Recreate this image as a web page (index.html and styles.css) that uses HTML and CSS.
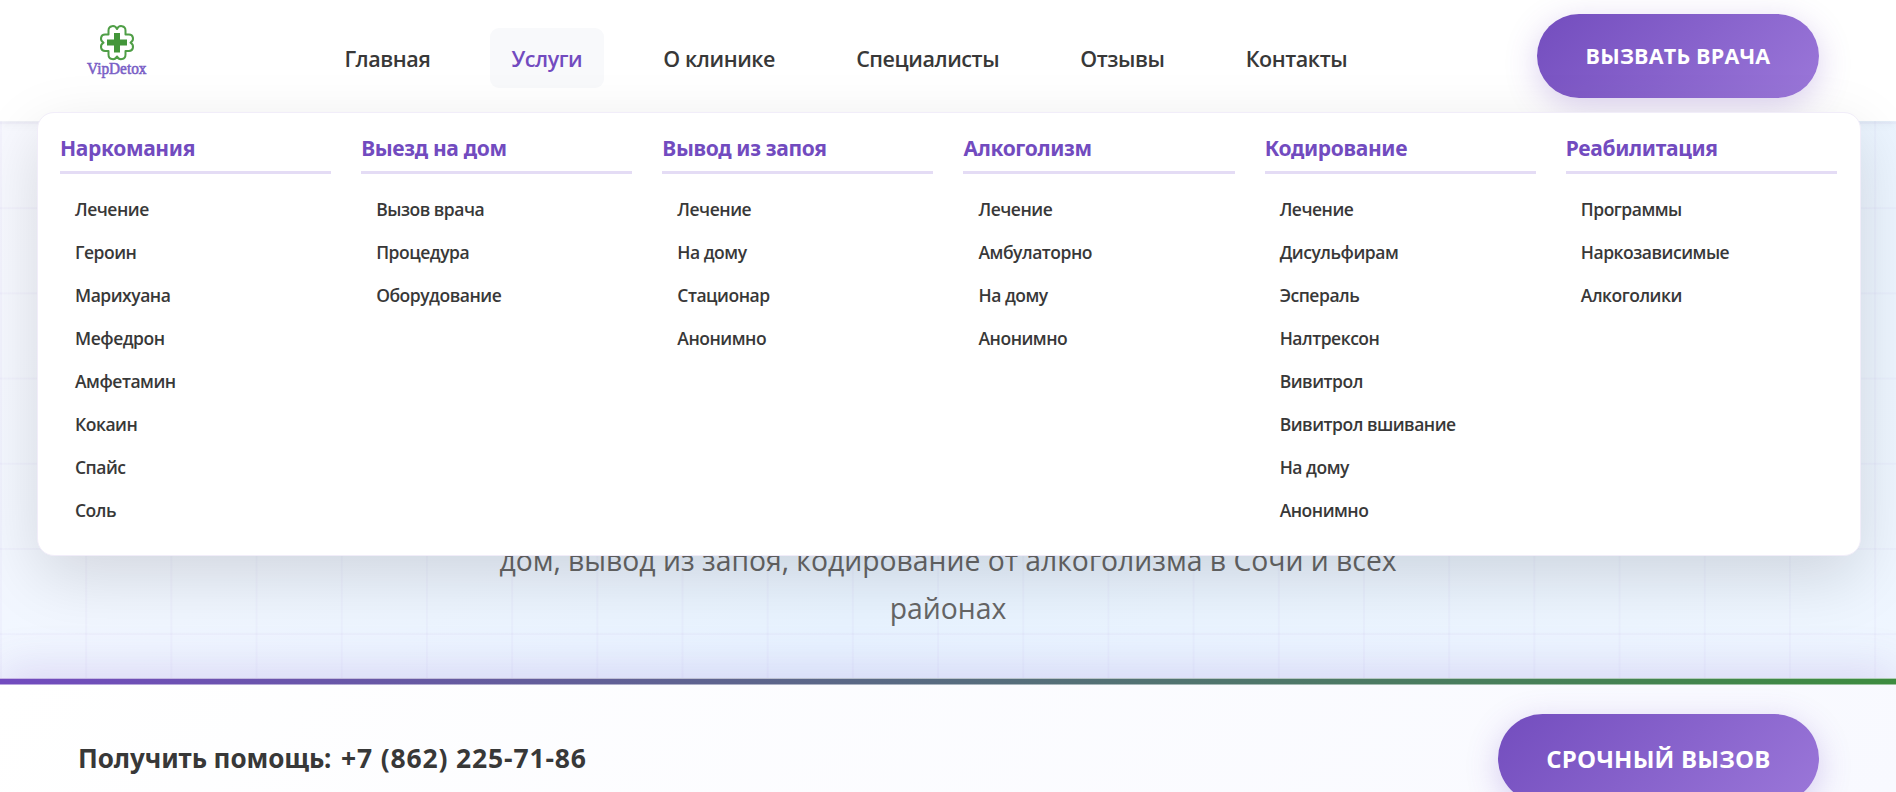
FILE: index.html
```
<!DOCTYPE html>
<html lang="ru">
<head>
    <meta charset="UTF-8">
    <meta name="viewport" content="width=device-width, initial-scale=1.0">
    <title>VipDetox</title>
    <link rel="stylesheet" href="styles.css">
</head>
<body>
    <header class="header">
        <a href="#" class="logo">
            <svg width="80" height="60" viewBox="0 0 80 60">
                <path d="M40 7C38 2.500 31.500 3.500 31.500 8.500V12.500H28C23.500 12.500 22.500 18.500 26.500 20.700C22.500 23 23.500 29 28 29H31.500V32.500C31.500 37.800 38 38.800 40 34.500C42 38.800 48.500 37.800 48.500 32.500V29H52C56.500 29 57.500 23 53.500 20.700C57.500 18.500 56.500 12.500 52 12.500H48.500V8.500C48.500 3.500 42 2.500 40 7Z" fill="none" stroke="#4f9e46" stroke-width="2" stroke-linejoin="round"/>
                <path d="M37 11h6v6.500h7v6h-7v7h-6v-7h-7v-6h7z" fill="#43963a"/>
                <text x="10" y="51.500" textLength="59.500" lengthAdjust="spacingAndGlyphs" class="logo-text">VipDetox</text>
            </svg>
        </a>
        <nav class="nav">
            <a href="#">Главная</a>
            <a href="#" class="active">Услуги</a>
            <a href="#">О клинике</a>
            <a href="#">Специалисты</a>
            <a href="#">Отзывы</a>
            <a href="#">Контакты</a>
        </nav>
        <a href="#" class="btn">ВЫЗВАТЬ ВРАЧА</a>

        <div class="mega-menu">
            <div class="mega-column">
                <h4>Наркомания</h4>
                <a href="#">Лечение</a>
                <a href="#">Героин</a>
                <a href="#">Марихуана</a>
                <a href="#">Мефедрон</a>
                <a href="#">Амфетамин</a>
                <a href="#">Кокаин</a>
                <a href="#">Спайс</a>
                <a href="#">Соль</a>
            </div>
            <div class="mega-column">
                <h4>Выезд на дом</h4>
                <a href="#">Вызов врача</a>
                <a href="#">Процедура</a>
                <a href="#">Оборудование</a>
            </div>
            <div class="mega-column">
                <h4>Вывод из запоя</h4>
                <a href="#">Лечение</a>
                <a href="#">На дому</a>
                <a href="#">Стационар</a>
                <a href="#">Анонимно</a>
            </div>
            <div class="mega-column">
                <h4>Алкоголизм</h4>
                <a href="#">Лечение</a>
                <a href="#">Амбулаторно</a>
                <a href="#">На дому</a>
                <a href="#">Анонимно</a>
            </div>
            <div class="mega-column">
                <h4>Кодирование</h4>
                <a href="#">Лечение</a>
                <a href="#">Дисульфирам</a>
                <a href="#">Эспераль</a>
                <a href="#">Налтрексон</a>
                <a href="#">Вивитрол</a>
                <a href="#">Вивитрол вшивание</a>
                <a href="#">На дому</a>
                <a href="#">Анонимно</a>
            </div>
            <div class="mega-column">
                <h4>Реабилитация</h4>
                <a href="#">Программы</a>
                <a href="#">Наркозависимые</a>
                <a href="#">Алкоголики</a>
            </div>
        </div>
    </header>

    <section class="hero">
        <p>дом, вывод из запоя, кодирование от алкоголизма в Сочи и всех районах</p>
    </section>

    <section class="cta">
        <div class="cta-phone">Получить помощь: <span>+7 (862) 225-71-86</span></div>
        <a href="#" class="btn btn-large">СРОЧНЫЙ ВЫЗОВ</a>
    </section>
</body>
</html>
```
FILE: styles.css
```
* {
    margin: 0;
    padding: 0;
    box-sizing: border-box;
}

body {
    height: 792px;
    overflow: hidden;
    font-family: "Open Sans", "Noto Sans", sans-serif;
    color: #383838;
    background: #fff;
}

a {
    color: inherit;
    text-decoration: none;
}

.header {
    position: relative;
    z-index: 10;
    display: flex;
    align-items: flex-start;
    height: 121px;
    padding: 14px 77px 0;
    background: #fff;
    box-shadow: 0 2px 10px rgba(0, 0, 0, 0.06);
}

.logo {
    width: 80px;
    height: 60px;
    margin-top: 8px;
}

.logo svg {
    display: block;
}

.logo-text {
    font: 17px "Liberation Serif", serif;
    fill: #7a5fc6;
    stroke: #7a5fc6;
    stroke-width: 0.6;
}

.nav {
    display: flex;
    gap: 38.3px;
    margin: 14px 0 0 166px;
}

.nav a {
    height: 60px;
    padding: 0 21.4px;
    border-radius: 9px;
    font-size: 21.5px;
    font-weight: 600;
    letter-spacing: -0.42px;
    line-height: 61px;
    white-space: nowrap;
}

.nav a.active {
    color: #724bbf;
    background: #f8f9fb;
}

.btn {
    margin-left: auto;
    width: 282px;
    height: 84px;
    border-radius: 53px;
    background: linear-gradient(135deg, #734dbe, #9b77d9);
    box-shadow: 0 8px 32px rgba(111, 66, 193, 0.25);
    color: #fff;
    font-size: 21.5px;
    font-weight: 700;
    letter-spacing: 0.2px;
    line-height: 84px;
    text-align: center;
    white-space: nowrap;
}

/* services dropdown */
.mega-menu {
    position: absolute;
    top: 112px;
    left: 37px;
    right: 35px;
    height: 444px;
    padding: 19px 23px 19px 22px;
    display: grid;
    grid-template-columns: repeat(6, 1fr);
    gap: 30px;
    background: #fff;
    border: 1px solid #f1edf9;
    border-radius: 17px;
    box-shadow: 0 21px 64px rgba(0, 0, 0, 0.13);
}

.mega-column h4 {
    height: 42px;
    margin-bottom: 14px;
    border-bottom: 3px solid #e4dcf5;
    color: #724bbf;
    font-family: "Noto Sans", sans-serif;
    font-size: 21px;
    font-weight: 700;
    letter-spacing: -0.33px;
    line-height: 32px;
    white-space: nowrap;
}

.mega-column a {
    display: block;
    height: 43px;
    padding-left: 15px;
    font-size: 17.5px;
    font-weight: 600;
    letter-spacing: -0.48px;
    line-height: 43px;
    white-space: nowrap;
}

.hero {
    display: flex;
    align-items: flex-end;
    justify-content: center;
    height: 557px;
    padding-bottom: 46px;
    background:
        linear-gradient(rgba(111, 66, 193, 0.03) 2px, transparent 2px) 0 1px / 85.2px 85.2px,
        linear-gradient(90deg, rgba(111, 66, 193, 0.03) 2px, transparent 2px) 0 0 / 85.2px 85.2px,
        linear-gradient(135deg, #f8f9ff 0%, #e8f3ff 55%, #eff6ff 100%);
}

.hero p {
    width: 959px;
    color: #666;
    font-size: 28.3px;
    line-height: 48px;
    text-align: center;
}

.cta {
    position: relative;
    display: flex;
    align-items: flex-start;
    height: 114px;
    padding: 36px 77px 0 78px;
    background: linear-gradient(135deg, #fff, #f8f9ff);
    box-shadow: 0 -10px 45px rgba(111, 66, 193, 0.16);
}

.cta::before {
    content: "";
    position: absolute;
    top: 0;
    left: 0;
    right: 0;
    height: 7px;
    background: linear-gradient(90deg, #724bbf, #3d8c40);
    mask: linear-gradient(rgba(0, 0, 0, 0.4) 1px, #000 1px, #000 6px, rgba(0, 0, 0, 0.5) 6px);
}

.cta-phone {
    font-family: "Noto Sans", sans-serif;
    font-size: 26px;
    font-weight: 700;
    letter-spacing: -0.08px;
    line-height: 89px;
    white-space: nowrap;
}

.cta-phone span {
    margin-left: 3px;
    font-family: "Open Sans", sans-serif;
    font-size: 26.5px;
    letter-spacing: 0.85px;
}

.btn-large {
    width: 321px;
    height: 89px;
    font-size: 24px;
    line-height: 89px;
}
```
